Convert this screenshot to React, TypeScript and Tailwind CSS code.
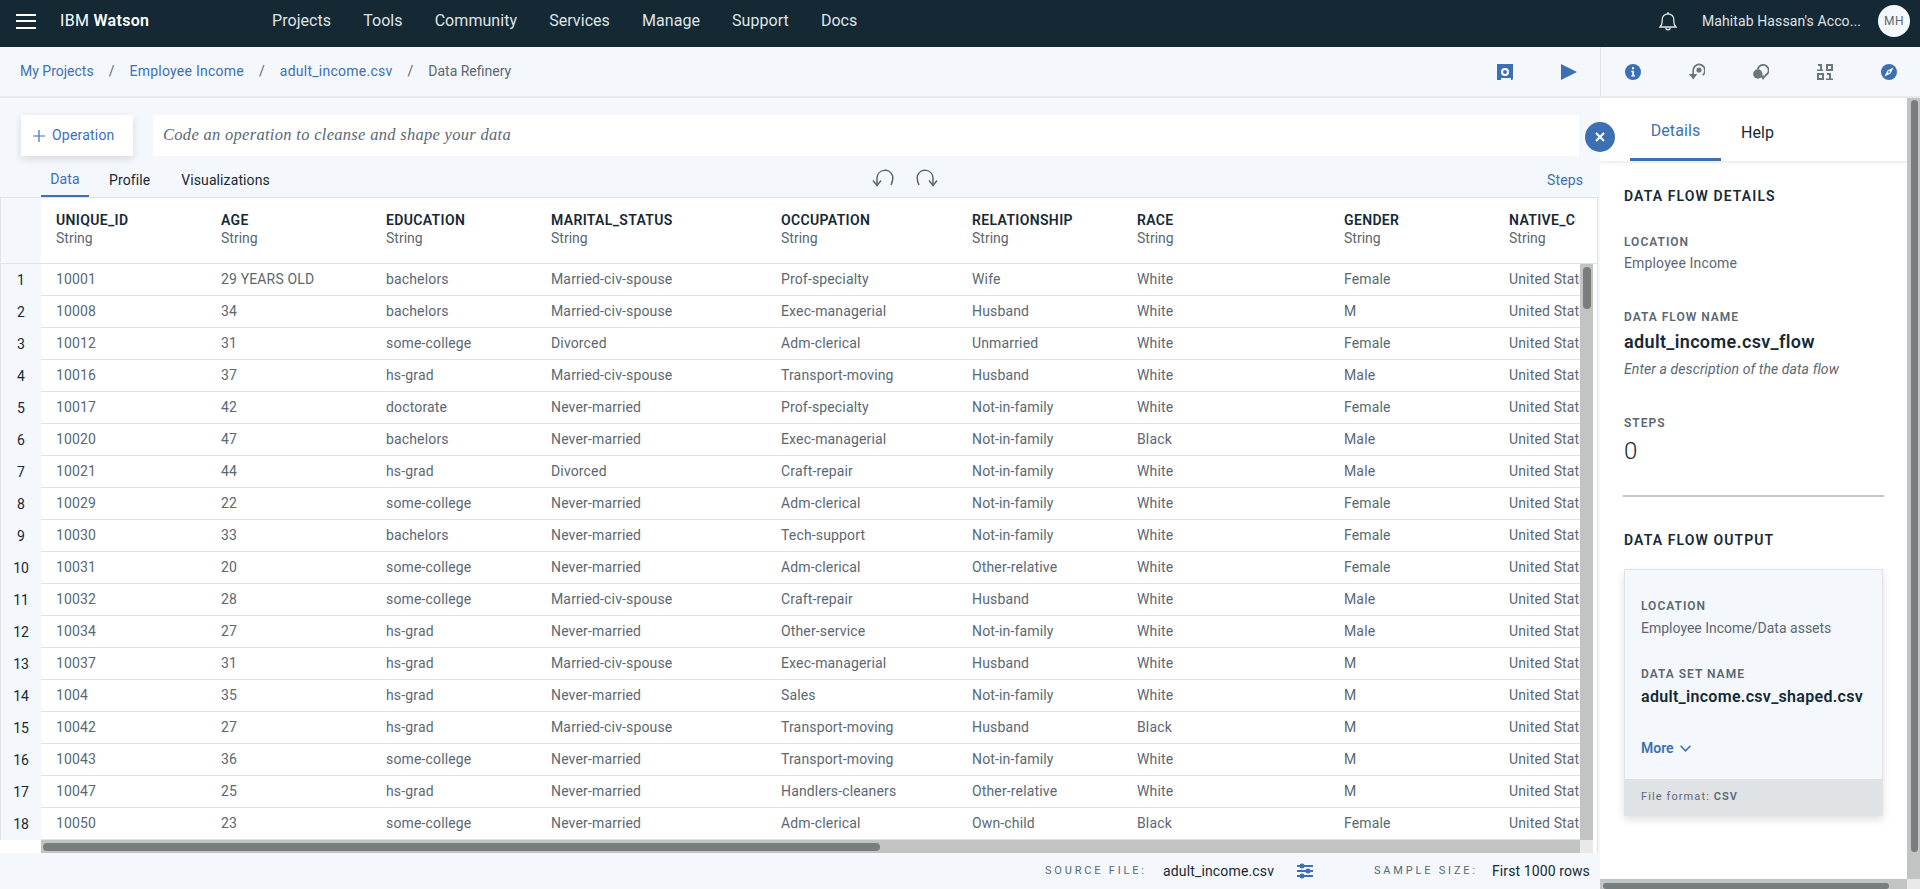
const navItems = ["Projects", "Tools", "Community", "Services", "Manage", "Support", "Docs"]

const columns = [
    { name: "UNIQUE_ID", width: "w-[165px]" },
    { name: "AGE", width: "w-[165px]" },
    { name: "EDUCATION", width: "w-[165px]" },
    { name: "MARITAL_STATUS", width: "w-[230px]" },
    { name: "OCCUPATION", width: "w-[191px]" },
    { name: "RELATIONSHIP", width: "w-[165px]" },
    { name: "RACE", width: "w-[207px]" },
    { name: "GENDER", width: "w-[165px]" },
    { name: "NATIVE_COUNTRY", width: "w-[82px]" },
]

const rows = [
    ["10001", "29 YEARS OLD", "bachelors", "Married-civ-spouse", "Prof-specialty", "Wife", "White", "Female"],
    ["10008", "34", "bachelors", "Married-civ-spouse", "Exec-managerial", "Husband", "White", "M"],
    ["10012", "31", "some-college", "Divorced", "Adm-clerical", "Unmarried", "White", "Female"],
    ["10016", "37", "hs-grad", "Married-civ-spouse", "Transport-moving", "Husband", "White", "Male"],
    ["10017", "42", "doctorate", "Never-married", "Prof-specialty", "Not-in-family", "White", "Female"],
    ["10020", "47", "bachelors", "Never-married", "Exec-managerial", "Not-in-family", "Black", "Male"],
    ["10021", "44", "hs-grad", "Divorced", "Craft-repair", "Not-in-family", "White", "Male"],
    ["10029", "22", "some-college", "Never-married", "Adm-clerical", "Not-in-family", "White", "Female"],
    ["10030", "33", "bachelors", "Never-married", "Tech-support", "Not-in-family", "White", "Female"],
    ["10031", "20", "some-college", "Never-married", "Adm-clerical", "Other-relative", "White", "Female"],
    ["10032", "28", "some-college", "Married-civ-spouse", "Craft-repair", "Husband", "White", "Male"],
    ["10034", "27", "hs-grad", "Never-married", "Other-service", "Not-in-family", "White", "Male"],
    ["10037", "31", "hs-grad", "Married-civ-spouse", "Exec-managerial", "Husband", "White", "M"],
    ["1004", "35", "hs-grad", "Never-married", "Sales", "Not-in-family", "White", "M"],
    ["10042", "27", "hs-grad", "Married-civ-spouse", "Transport-moving", "Husband", "Black", "M"],
    ["10043", "36", "some-college", "Never-married", "Transport-moving", "Not-in-family", "White", "M"],
    ["10047", "25", "hs-grad", "Never-married", "Handlers-cleaners", "Other-relative", "White", "M"],
    ["10050", "23", "some-college", "Never-married", "Adm-clerical", "Own-child", "Black", "Female"],
]

function Header() {
    return (
        <header className="flex h-[47px] shrink-0 items-center bg-[#152935] pb-[5px] text-[16px] text-[#dfe3e6]">
            <div className="ml-4 flex w-5 flex-col gap-[4.5px]">
                <span className="h-[2px] bg-white" />
                <span className="h-[2px] bg-white" />
                <span className="h-[2px] bg-white" />
            </div>
            <div className="ml-6 w-[212px] tracking-[0.3px] text-white">
                IBM <span className="font-semibold">Watson</span>
            </div>
            <nav className="flex gap-8 tracking-[0.06px]">
                {navItems.map((item) => (
                    <span key={item}>{item}</span>
                ))}
            </nav>
            <svg className="ml-auto" width="18" height="20" viewBox="0 0 18 20" fill="none" stroke="#dfe3e6" strokeWidth="1.3">
                <path d="M1 16c1.6-1.6 2.2-2.6 2.2-5.5V8.5C3.2 5.2 5.6 3 9 3s5.8 2.2 5.8 5.5v2c0 2.900.6 3.900 2.200 5.500z" />
                <path d="M9 1v2M6.800 16.500c0 3 4.400 3 4.400 0" />
            </svg>
            <span className="ml-[25px] w-[155px] whitespace-nowrap text-[14px] tracking-[0.1px]">Mahitab Hassan's Acco...</span>
            <div className="ml-[21px] mr-[10px] flex h-8 w-8 items-center justify-center rounded-full bg-[#f4f7fb] text-[12px] tracking-[0.5px] text-[#5a6872]">
                MH
            </div>
        </header>
    )
}

function SubHeader() {
    return (
        <div className="flex h-[51px] shrink-0 border-b-2 border-[#e6e9ee] bg-[#f4f7fb]">
            <div className="flex flex-1 items-center pl-5 text-[14px] text-[#3d70b2]">
                <a>My Projects</a>
                <span className="mx-[15px] text-[#5a6872]">/</span>
                <a className="tracking-[0.25px]">Employee Income</a>
                <span className="mx-[15px] text-[#5a6872]">/</span>
                <a className="tracking-[0.25px]">adult_income.csv</a>
                <span className="mx-[15px] text-[#5a6872]">/</span>
                <span className="text-[#5a6872]">Data Refinery</span>
                <svg className="ml-auto" width="16" height="16" viewBox="0 0 16 16">
                    <path fill="#3d70b2" d="M0 0h16v15l-1 1h-1v-2H4v2H0z" />
                    <circle cx="8" cy="8" r="3" fill="none" stroke="#fff" strokeWidth="2" />
                </svg>
                <svg className="ml-[48px] mr-[23px]" width="16" height="16" viewBox="0 0 16 16">
                    <path fill="#3d70b2" d="M0 0l16 8-16 8z" />
                </svg>
            </div>
            <div className="flex w-[320px] items-center justify-between border-l border-[#dfe3e6] pl-[24px] pr-[23px]">
                <svg width="16" height="16" viewBox="0 0 16 16">
                    <circle cx="8" cy="8" r="8" fill="#3d70b2" />
                    <path fill="#fff" d="M7 3.200h2v2H7zM6.300 6.800H9v4.400h1v1.400H6.300v-1.400h1V8.200h-1z" />
                </svg>
                <svg width="16" height="17" viewBox="0 0 16 17" fill="none">
                    <path stroke="#6d7777" strokeWidth="1.700" d="M4.200 12V7.500a5.900 5.900 0 1 1 9.500 4.600" />
                    <circle cx="10" cy="7" r="2.600" fill="#6d7777" />
                    <path fill="#6d7777" d="M0 11h8.400l-4.200 5.500z" />
                </svg>
                <svg width="16" height="16" viewBox="0 0 16 16" fill="none">
                    <path stroke="#6d7777" strokeWidth="1.800" d="M4.800 5.200a5.500 5.500 0 1 1 7.200 6.400" />
                    <circle cx="4.800" cy="10" r="4.700" fill="#6d7777" />
                    <path fill="#6d7777" d="M7 11.500h6.200L10.100 16z" />
                </svg>
                <svg width="16" height="16" viewBox="0 0 16 16" fill="#6d7777">
                    <path d="M1 0h4v7H3V2H1zM0 5.500h6V7H0z" />
                    <path fillRule="evenodd" d="M9 0h7v7H9zm2 2v3h3V2z" />
                    <path fillRule="evenodd" d="M0 9h7v7H0zm2 2v3h3v-3z" />
                    <path d="M10 9h4v7h-2v-5h-2zM9 14.500h7V16H9z" />
                </svg>
                <svg width="16" height="16" viewBox="0 0 16 16">
                    <circle cx="8" cy="8" r="8" fill="#3d70b2" />
                    <path fill="#fff" d="M12.500 3.500L9.500 9.500 3.500 12.500 6.500 6.500z" />
                    <circle cx="8" cy="8" r="1" fill="#3d70b2" />
                </svg>
            </div>
        </div>
    )
}

function CommandBar() {
    return (
        <div className="flex h-[58px] shrink-0 items-end px-[21px]">
            <button className="flex h-[41px] w-[112px] items-center bg-white pl-3 text-[14px] text-[#3d70b2] shadow-[0_3px_8px_rgba(0,0,0,0.12)]">
                <svg width="12" height="12" viewBox="0 0 12 12" stroke="#3d70b2" strokeWidth="1.200">
                    <path d="M6 0v12M0 6h12" />
                </svg>
                <span className="ml-[7px] tracking-[0.2px]">Operation</span>
            </button>
            <div className="ml-5 flex h-[41px] w-[1426px] items-center bg-white pl-[10px] font-['Liberation_Serif',serif] text-[16.500px] italic tracking-[0.3px] text-[#5a6872]">
                Code an operation to cleanse and shape your data
            </div>
        </div>
    )
}

function TabRow() {
    return (
        <div className="flex h-[41px] shrink-0 items-end text-[14px] tracking-[0.1px] text-[#152935]">
            <div className="ml-[41px] flex h-[41px] w-[48px] items-center justify-center border-b-2 border-[#3d70b2] pt-[7px] text-[#3d70b2]">Data</div>
            <div className="ml-5 flex h-[41px] items-center pt-[7px]">Profile</div>
            <div className="ml-[31px] flex h-[41px] items-center pt-[7px]">Visualizations</div>
            <div className="ml-[602px] flex h-[41px] items-center gap-[22px] pt-[3px]">
                <svg width="22" height="18" viewBox="0 0 22 18" fill="none" stroke="#5a6872" strokeWidth="1.500">
                    <path d="M5 16V9a8 8 0 0 1 15.500-2.500c.7 3 .2 6-1.500 9.500" />
                    <path d="M1 11.500l4 5 4-5" />
                </svg>
                <svg width="22" height="18" viewBox="0 0 22 18" fill="none" stroke="#5a6872" strokeWidth="1.500">
                    <path d="M17 16V9A8 8 0 0 0 1.500 6.500c-.7 3-.2 6 1.500 9.500" />
                    <path d="M13 11.500l4 5 4-5" />
                </svg>
            </div>
            <div className="ml-auto mr-[17px] flex h-[41px] items-center pt-[7px] text-[#3d70b2]">Steps</div>
        </div>
    )
}

function DataTable() {
    return (
        <div className="flex w-[1598px] flex-1 flex-col border-r border-t border-[#dfe3e6] bg-white text-[14px] text-[#5a6872]">
            <div className="flex h-[66px] shrink-0 border-b border-[#dfe3e6]">
                <div className="w-[41px] shrink-0 border-l border-[#dfe3e6] bg-[#f4f7fb]" />
                {columns.map((col) => (
                    <div key={col.name} className={`${col.width} shrink-0 overflow-hidden whitespace-nowrap pl-[15px] pt-[13px] leading-[18px]`}>
                        <div className="font-semibold tracking-[0.35px] text-[#152935]">{col.name}</div>
                        <div>String</div>
                    </div>
                ))}
            </div>
            <div className="flex flex-1">
                <div className="flex w-[1580px] shrink-0 flex-col">
                    {rows.map((row, index) => (
                        <div key={row[0]} className="flex h-[32px] shrink-0">
                            <div className="flex w-[41px] shrink-0 items-center justify-center border-l border-[#dfe3e6] bg-[#f4f7fb] text-[#152935]">{index + 1}</div>
                            <div className="flex flex-1 items-center border-b border-[#dfe3e6] tracking-[0.15px]">
                                {row.map((cell, i) => (
                                    <div key={i} className={`${columns[i].width} shrink-0 whitespace-nowrap pl-[15px]`}>{cell}</div>
                                ))}
                                <div className="w-[86px] shrink-0 overflow-hidden whitespace-nowrap pl-[15px]">United States</div>
                            </div>
                        </div>
                    ))}
                    <div className="flex h-[13px] shrink-0">
                        <div className="w-[41px] bg-white" />
                        <div className="flex flex-1 items-center bg-[#c1c4c2] px-[2px]">
                            <div className="h-[8px] w-[837px] rounded-[4px] bg-[#787d7d]" />
                        </div>
                    </div>
                </div>
                <div className="flex w-[13px] shrink-0 flex-col bg-[#c1c4c2]">
                    <div className="mx-auto mt-[3px] h-[42px] w-[8px] rounded-[4px] bg-[#787d7d]" />
                    <div className="mt-auto h-[13px] bg-[#e8e9e8]" />
                </div>
            </div>
        </div>
    )
}

function FooterBar() {
    return (
        <div className="flex h-[36px] shrink-0 items-center pl-[1045px] text-[14px] text-[#152935]">
            <span className="w-[118px] text-[11px] tracking-[2.800px] text-[#5a6872]">SOURCE FILE:</span>
            <span className="w-[134px] tracking-[0.15px]">adult_income.csv</span>
            <svg width="16" height="16" viewBox="0 0 16 16">
                <path stroke="#3d70b2" strokeWidth="2" d="M0 3h16M0 8h16M0 13h16" />
                <circle cx="5" cy="3" r="2.500" fill="#3d70b2" />
                <circle cx="11" cy="8" r="2.500" fill="#3d70b2" />
                <circle cx="5" cy="13" r="2.500" fill="#3d70b2" />
            </svg>
            <span className="ml-[61px] w-[118px] text-[11px] tracking-[2.800px] text-[#5a6872]">SAMPLE SIZE:</span>
            <span className="tracking-[0.1px]">First 1000 rows</span>
        </div>
    )
}

function Label({ children, className }: { children: string; className: string }) {
    return <div className={`text-[12px] font-semibold leading-[16px] tracking-[1px] text-[#5a6872] ${className}`}>{children}</div>
}

function DetailsPanel() {
    return (
        <aside className="relative flex w-[320px] shrink-0 flex-col bg-white text-[14px] text-[#5a6872]">
            <button className="absolute -left-[15px] top-[24px] z-10 flex h-[30px] w-[30px] items-center justify-center rounded-full bg-[#3d70b2]">
                <svg width="10" height="10" viewBox="0 0 10 10" stroke="#fff" strokeWidth="2">
                    <path d="M1 1l8 8M9 1l-8 8" />
                </svg>
            </button>
            <div className="flex flex-1 overflow-hidden">
                <div className="w-[307px] shrink-0">
                    <div className="flex h-[63px] pl-[30px] text-[16px] tracking-[0.1px] shadow-[0_2px_3px_rgba(0,0,0,0.08)]">
                        <div className="flex w-[91px] items-center justify-center border-b-[3px] border-[#3d70b2] pt-[6px] text-[#3d70b2]">Details</div>
                        <div className="ml-5 flex items-center pt-[6px] text-[#152935]">Help</div>
                    </div>
                    <div className="pl-6">
                        <h3 className="mt-[26px] text-[14px] font-semibold leading-[18px] tracking-[1.100px] text-[#152935]">DATA FLOW DETAILS</h3>
                        <Label className="mt-[29px]">LOCATION</Label>
                        <div className="mt-[4px] leading-[18px] tracking-[0.15px]">Employee Income</div>
                        <Label className="mt-[37px]">DATA FLOW NAME</Label>
                        <div className="mt-[5px] text-[18px] font-semibold leading-[24px] tracking-[0.35px] text-[#152935]">adult_income.csv_flow</div>
                        <div className="mt-[6px] italic leading-[18px] tracking-[0.1px]">Enter a description of the data flow</div>
                        <Label className="mt-[37px]">STEPS</Label>
                        <div className="mt-[5px] text-[24px] font-light leading-[30px] text-[#152935]">0</div>
                        <div className="-ml-px mt-[29px] h-[2px] w-[261px] bg-[#c4c6c6]" />
                        <h3 className="mt-[34px] text-[14px] font-semibold leading-[18px] tracking-[1.100px] text-[#152935]">DATA FLOW OUTPUT</h3>
                        <div className="mt-5 flex h-[247px] w-[259px] flex-col border border-[#dfe3e6] bg-[#f4f7fb] shadow-[0_4px_8px_rgba(0,0,0,0.12)]">
                            <div className="flex-1 pl-4 pt-[28px]">
                                <Label className="">LOCATION</Label>
                                <div className="mt-[5px] leading-[18px]">Employee Income/Data assets</div>
                                <Label className="mt-[29px]">DATA SET NAME</Label>
                                <div className="mt-[4px] whitespace-nowrap text-[16px] font-semibold leading-[22px] tracking-[0.3px] text-[#152935]">adult_income.csv_shaped.csv</div>
                                <div className="mt-[31px] flex items-center gap-[6px] font-semibold leading-[18px] text-[#3d70b2]">
                                    More
                                    <svg width="11" height="7" viewBox="0 0 11 7" fill="none" stroke="#3d70b2" strokeWidth="1.600">
                                        <path d="M.6.8l4.900 5 4.900-5" />
                                    </svg>
                                </div>
                            </div>
                            <div className="flex h-[36px] items-center bg-[#dfe3e6] pl-4 text-[11px] tracking-[1.100px]">
                                File format:&nbsp;<span className="font-semibold">CSV</span>
                            </div>
                        </div>
                    </div>
                </div>
                <div className="flex w-[13px] shrink-0 flex-col items-end bg-[#c1c4c2] pr-[2px] pt-[2px]">
                    <div className="h-[752px] w-[7px] rounded-[4px] bg-[#787d7d]" />
                </div>
            </div>
            <div className="flex h-[10px] shrink-0">
                <div className="flex w-[307px] items-end bg-[#c1c4c2] pl-[3px]">
                    <div className="h-[6px] w-[286px] rounded-[3px] bg-[#787d7d]" />
                </div>
                <div className="w-[13px] bg-[#e8e9e8]" />
            </div>
        </aside>
    )
}

export default function App() {
    return (
        <div className="flex h-[889px] w-[1920px] flex-col overflow-hidden bg-[#f4f7fb] font-['Roboto',sans-serif]">
            <Header />
            <SubHeader />
            <div className="flex min-h-0 flex-1">
                <main className="flex w-[1600px] shrink-0 flex-col">
                    <CommandBar />
                    <TabRow />
                    <DataTable />
                    <FooterBar />
                </main>
                <DetailsPanel />
            </div>
        </div>
    )
}
